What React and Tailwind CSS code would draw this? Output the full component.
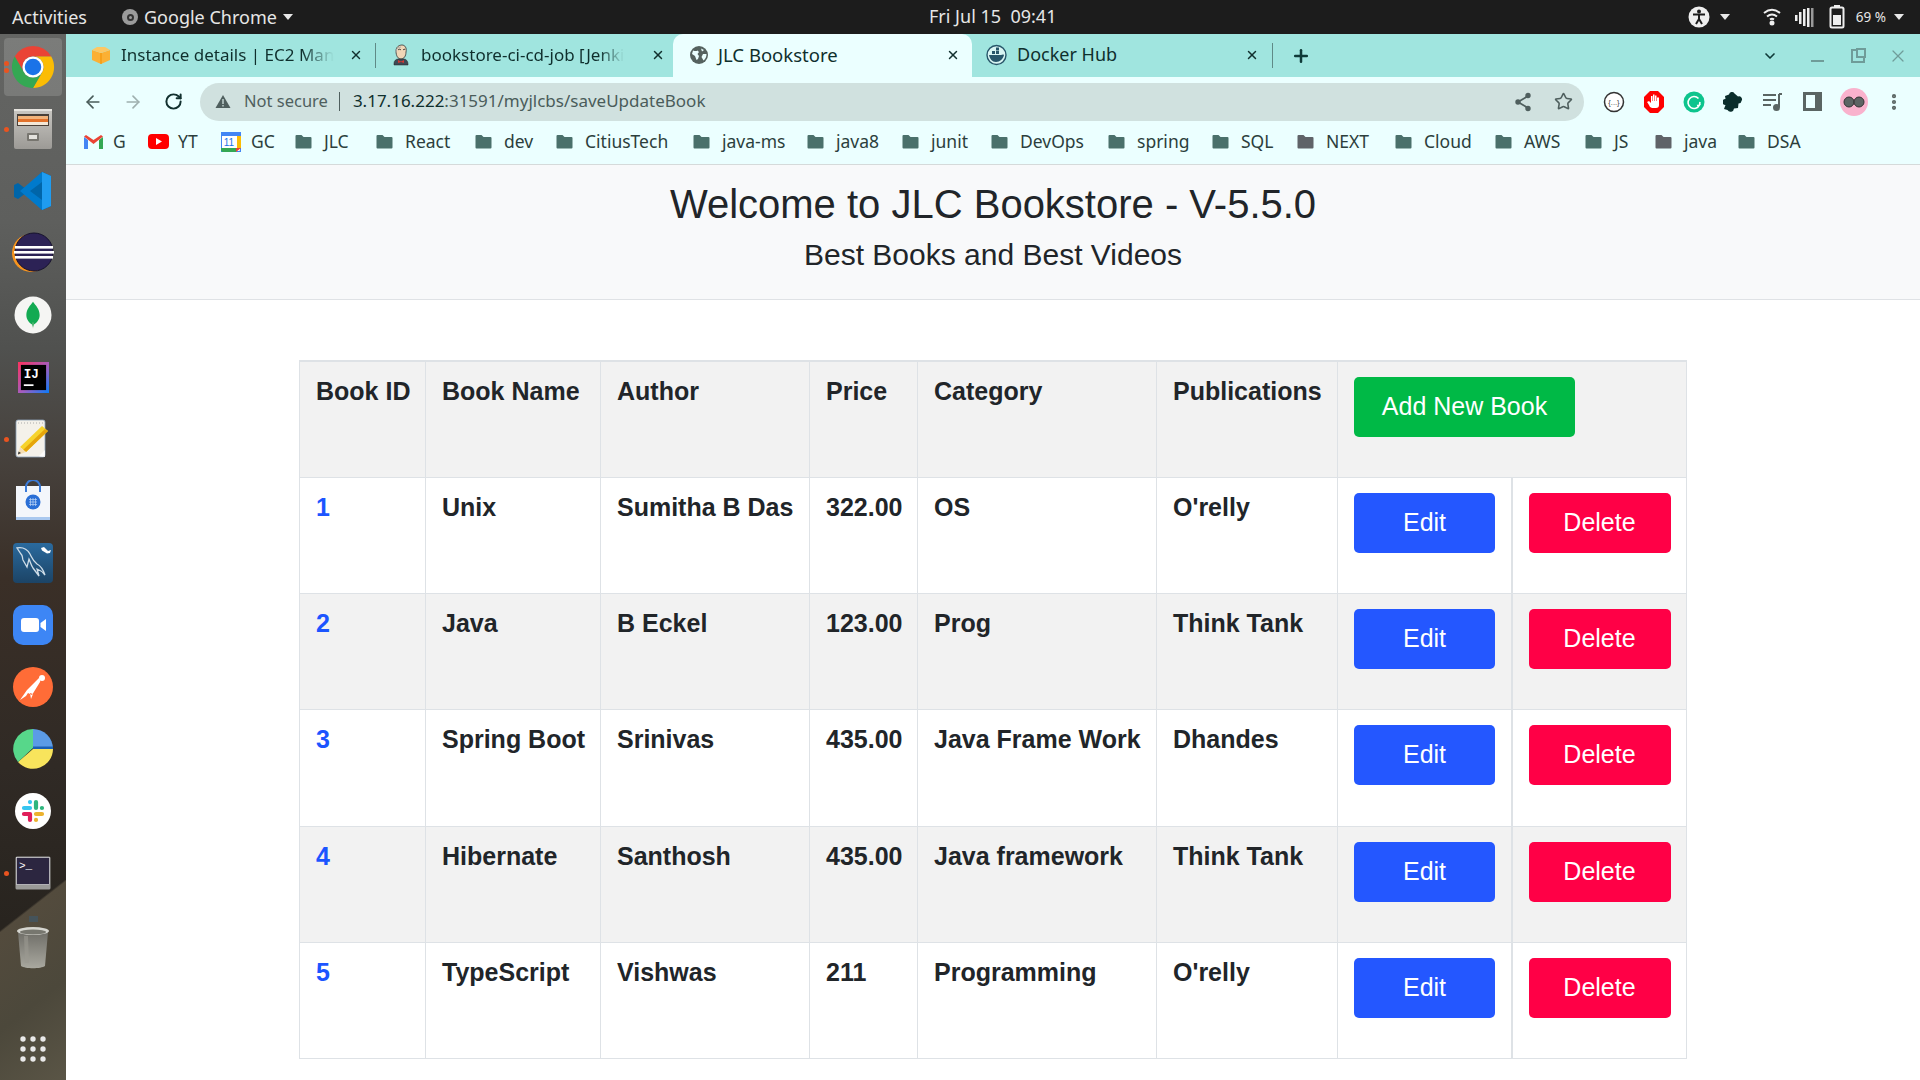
import React from 'react';
import { ArrowLeft, ArrowRight, RotateCw, Star, Plus, ChevronDown, X, EllipsisVertical } from 'lucide-react';

const ui = "font-['Noto_Sans','Lato',sans-serif]";

function ChromeLogo({ size = 46 }) {
  return (
    <svg width={size} height={size} viewBox="0 0 48 48">
      <path fill="#ea4335" d="M24 2a22 22 0 0 1 19.05 11H24a11 11 0 0 0-9.53 16.5L4.95 13A22 22 0 0 1 24 2z" />
      <path fill="#fbbc04" d="M43.05 13A22 22 0 0 1 24 46l9.53-16.5A11 11 0 0 0 24 13z" />
      <path fill="#34a853" d="M4.95 13 14.47 29.5A11 11 0 0 0 33.53 29.5L24 46A22 22 0 0 1 4.95 13z" />
      <circle cx="24" cy="24" r="11" fill="#fff" />
      <circle cx="24" cy="24" r="8.6" fill="#1a73e8" />
    </svg>
  );
}

function FilesIcon() {
  return (
    <svg width="40" height="40" viewBox="0 0 40 40">
      <defs>
        <linearGradient id="cab" x1="0" y1="0" x2="0" y2="1">
          <stop offset="0" stopColor="#c9c7c2" />
          <stop offset="1" stopColor="#9c9a96" />
        </linearGradient>
      </defs>
      <rect x="1" y="0" width="38" height="40" rx="2" fill="url(#cab)" />
      <rect x="1" y="0" width="38" height="2" fill="#e6e4df" />
      <rect x="4" y="5" width="32" height="12" fill="#4a4038" />
      <rect x="5" y="7" width="30" height="3" fill="#f2b37a" />
      <rect x="5" y="10" width="30" height="3" fill="#e2712a" />
      <rect x="5" y="13" width="30" height="3" fill="#f4e7d6" />
      <rect x="14" y="24" width="12" height="8" rx="1" fill="#77756f" />
      <rect x="16" y="26" width="8" height="4" fill="#e4e2dd" />
    </svg>
  );
}

function VscodeIcon() {
  return (
    <svg width="42" height="42" viewBox="0 0 42 42">
      <path fill="#0065a9" d="M30 2 14 19 6 13 2 15v12l4 2 8-6 16 17 9-4V6z" />
      <path fill="#007acc" d="M30 2 8 21l22 19 9-4V6zM30 12v18L18 21z" fillRule="evenodd" />
      <path fill="#1f9cf0" d="M30 2l9 4v30l-9 4z" />
    </svg>
  );
}

function EclipseIcon() {
  return (
    <svg width="44" height="44" viewBox="0 0 44 44">
      <circle cx="20" cy="22" r="19" fill="#f7941e" />
      <circle cx="23" cy="21" r="19" fill="#2c2255" stroke="#16122c" strokeWidth="1" />
      <rect x="4" y="15" width="38" height="2.6" fill="#fff" />
      <rect x="3" y="20" width="40" height="2.6" fill="#fff" />
      <rect x="4" y="25" width="38" height="2.6" fill="#fff" />
    </svg>
  );
}

function MongoIcon() {
  return (
    <svg width="38" height="38" viewBox="0 0 40 40">
      <circle cx="20" cy="20" r="19.500" fill="#f5f5f3" />
      <path fill="#13aa52" d="M20 6c3 4 7 8 7 14 0 5-3 8-6 10l-1 3-1-3c-3-2-6-5-6-10 0-6 4-10 7-14z" />
      <path fill="#b8c4a6" d="M19.600 28h.8l-.2 6h-.4z" />
    </svg>
  );
}

function IdeaIcon() {
  return (
    <svg width="31" height="31" viewBox="0 0 32 32">
      <defs>
        <linearGradient id="ij" x1="0" y1="0" x2="1" y2="1">
          <stop offset="0" stopColor="#fe315d" />
          <stop offset="0.55" stopColor="#a35ec0" />
          <stop offset="1" stopColor="#087cfa" />
        </linearGradient>
      </defs>
      <rect width="32" height="32" fill="url(#ij)" />
      <rect x="3" y="3" width="26" height="26" fill="#000" />
      <text x="6" y="17" fontFamily="Liberation Mono" fontWeight="700" fontSize="13" fill="#fff">IJ</text>
      <rect x="6" y="23" width="10" height="1.800" fill="#fff" />
    </svg>
  );
}

function NotesIcon() {
  return (
    <svg width="36" height="40" viewBox="0 0 36 40">
      <rect x="1" y="1" width="29" height="37" rx="2" fill="#f4f1ea" stroke="#8da2b8" strokeWidth="0.8" />
      <path d="M3 4h25" stroke="#aaa" strokeDasharray="1 2" strokeWidth="1" />
      <path fill="#f6d32d" d="M5 28 27 7l6 5-22 21z" />
      <path fill="#e5a50a" d="M8 31l22-21 3 2-22 21z" />
      <path fill="#f5deb3" d="M5 28l6 5-8 3z" />
      <path fill="#333" d="M3.500 32.500 6 34l-3 1.500z" />
      <path fill="#fff" d="M30 38c-4 0-6-1-6-1l6-6z" opacity="0.8" />
    </svg>
  );
}

function StoreIcon() {
  return (
    <svg width="36" height="42" viewBox="0 0 36 42">
      <path d="M11 12V7a7 7 0 0 1 14 0v5" fill="none" stroke="#3b7bd8" strokeWidth="2" />
      <rect x="1" y="6" width="34" height="34" fill="#f3f6fb" />
      <path d="M11 6v6M25 6v6" stroke="#3b7bd8" strokeWidth="2" />
      <rect x="1" y="37" width="34" height="3" fill="#a9c8ef" />
      <circle cx="18" cy="22" r="7.500" fill="#2a6fd6" />
      <path d="M14 19.500h8M14 22h8M14 24.500h8M15.500 18v8M18 18v8M20.500 18v8" stroke="#bcd4f5" strokeWidth="0.7" />
    </svg>
  );
}

function MysqlIcon() {
  return (
    <svg width="40" height="40" viewBox="0 0 40 40">
      <defs>
        <linearGradient id="sql" x1="0" y1="0" x2="0" y2="1">
          <stop offset="0" stopColor="#2a6a9e" />
          <stop offset="1" stopColor="#1c4466" />
        </linearGradient>
      </defs>
      <rect width="40" height="40" rx="4" fill="url(#sql)" />
      <path d="M4 5c5-1 10 1 13 6 2 4 3 7 7 10 4 2 6 5 8 11-3-4-5-5-8-6l2 7-6-8c-2-3-3-7-4-9l-2 8-4-7c-1-3 0-4-2-6z" fill="none" stroke="#cfdde8" strokeWidth="1.300" />
      <path d="M28 5l3-1 4 4 3-1-1 3-3 .5-5-3z" fill="#fff" />
    </svg>
  );
}

function ZoomIcon() {
  return (
    <svg width="40" height="40" viewBox="0 0 40 40">
      <rect width="40" height="40" rx="10" fill="#3d86f5" />
      <rect x="8" y="13" width="18" height="14" rx="3" fill="#fff" />
      <path fill="#fff" d="M27.500 18 33 14v12l-5.500-4z" />
    </svg>
  );
}

function PostmanIcon() {
  return (
    <svg width="40" height="40" viewBox="0 0 40 40">
      <circle cx="20" cy="20" r="20" fill="#ff6c37" />
      <circle cx="29" cy="11" r="3" fill="#fff" />
      <path fill="#fff" d="M26 11 14 23l-7 10 6-4 2-3 4 2 8-13c1-2-1-4-1-4zM17 26l3 1-2 5z" />
    </svg>
  );
}

function PieIcon() {
  return (
    <svg width="40" height="40" viewBox="0 0 40 40">
      <path fill="#5b9be6" d="M20 0a20 20 0 0 1 20 20H20z" />
      <path fill="#1a5fb4" d="M20 17.500h20V20H20z" />
      <path fill="#f8e45c" d="M40 20a20 20 0 0 1-35 13l15-13z" />
      <path fill="#57d78a" d="M20 0v19L5 33A20 20 0 0 1 20 0z" />
    </svg>
  );
}

function SlackIcon() {
  return (
    <svg width="36" height="36" viewBox="0 0 36 36">
      <circle cx="18" cy="18" r="18" fill="#fff" />
      <g strokeWidth="4.200" strokeLinecap="round" fill="none">
        <path stroke="#36c5f0" d="M9 15h6M15 9v.1" />
        <path stroke="#2eb67d" d="M21 9v6M27 15h-.1" />
        <path stroke="#ecb22e" d="M21 21h6M21 27v-.1" />
        <path stroke="#e01e5a" d="M15 21v6M9 21h6" />
      </g>
    </svg>
  );
}

function TerminalIcon() {
  return (
    <svg width="36" height="34" viewBox="0 0 36 34">
      <rect x="0.500" y="0.500" width="35" height="33" rx="1.500" fill="#9a9a98" />
      <rect x="1.500" y="1.500" width="33" height="27" fill="#2c2640" stroke="#e8e8e8" strokeWidth="0.600" />
      <text x="4" y="13" fontFamily="Liberation Mono" fontSize="11" fill="#fff">{'>_'}</text>
    </svg>
  );
}

function TrashIcon() {
  return (
    <svg width="34" height="54" viewBox="0 0 34 54">
      <rect x="13" y="0" width="9" height="6" fill="#45535a" />
      <defs>
        <linearGradient id="bin" x1="0" y1="0" x2="0" y2="1">
          <stop offset="0" stopColor="#6f6e68" />
          <stop offset="1" stopColor="#a9a89f" />
        </linearGradient>
      </defs>
      <path fill="url(#bin)" d="M2 16h30l-3 34c-4 3-20 3-24 0z" />
      <path fill="#9b9a91" opacity="0.6" d="M8 20h4l1 27h-4z" />
      <ellipse cx="17" cy="15" rx="16" ry="4" fill="#d5d5cf" />
      <ellipse cx="17" cy="16" rx="13" ry="2.500" fill="#77776f" />
    </svg>
  );
}

function GridIcon() {
  return (
    <svg width="26" height="26" viewBox="0 0 26 26" fill="#e9e9e9">
      {[3, 13, 23].map((y) =>
        [3, 13, 23].map((x) => <circle key={`${x}-${y}`} cx={x} cy={y} r="2.700" />)
      )}
    </svg>
  );
}

function Dock() {
  const slots = [
    { icon: <ChromeLogo />, active: true, dots: 2 },
    { icon: <FilesIcon />, dots: 1 },
    { icon: <VscodeIcon /> },
    { icon: <EclipseIcon /> },
    { icon: <MongoIcon /> },
    { icon: <IdeaIcon /> },
    { icon: <NotesIcon />, dots: 1 },
    { icon: <StoreIcon /> },
    { icon: <MysqlIcon /> },
    { icon: <ZoomIcon /> },
    { icon: <PostmanIcon /> },
    { icon: <PieIcon /> },
    { icon: <SlackIcon /> },
    { icon: <TerminalIcon />, dots: 1 },
  ];
  return (
    <div className="relative flex w-[66px] shrink-0 flex-col overflow-hidden bg-[linear-gradient(180deg,#646563_0%,#5e5f5d_18%,#50514f_30%,#453f3a_42%,#3a2f27_52%,#302a25_70%,#28241f_85%)] pt-[2px]">
      <div className="absolute inset-x-0 bottom-0 h-[200px] bg-[linear-gradient(142deg,transparent_20%,#534b3d_21%,#4c483b_60%,#5a5546_100%)]" />
      {slots.map((s, i) => (
        <div key={i} className="relative flex h-[62px] shrink-0 items-center justify-center">
          {s.active && <div className="absolute inset-x-[4px] inset-y-[2px] rounded-[4px] bg-white/15" />}
          {s.dots === 1 && <div className="absolute left-[4px] top-[29px] h-[5px] w-[5px] rounded-full bg-[#e95420]" />}
          {s.dots === 2 && (
            <>
              <div className="absolute left-[4px] top-[25px] h-[5px] w-[5px] rounded-full bg-[#e95420]" />
              <div className="absolute left-[4px] top-[32px] h-[5px] w-[5px] rounded-full bg-[#e95420]" />
            </>
          )}
          <div className="relative flex">{s.icon}</div>
        </div>
      ))}
      <div className="relative mt-[12px] flex justify-center">
        <TrashIcon />
      </div>
      <div className="relative mt-auto flex justify-center pb-[18px]">
        <GridIcon />
      </div>
    </div>
  );
}

function Caret({ className = '' }) {
  return <span className={`inline-block h-0 w-0 border-x-[5px] border-t-[6px] border-x-transparent border-t-[#e8e8e8] ${className}`} />;
}

function TopBar() {
  return (
    <div className={`relative flex h-[34px] shrink-0 items-center bg-[#1c1c1c] text-[18px] text-[#e6e6e6] ${ui}`}>
      <span className="ml-[12px]">Activities</span>
      <span className="ml-[35px] flex h-[16px] w-[16px] items-center justify-center rounded-full bg-[#9b9b9b]">
        <span className="h-[7px] w-[7px] rounded-full border-2 border-[#333]" />
      </span>
      <span className="ml-[6px]">Google Chrome</span>
      <Caret className="ml-[6px]" />
      <span className="absolute left-[929px] top-[3px] whitespace-pre">Fri Jul 15  09:41</span>
      <div className="ml-auto flex items-center pr-[16px]">
        <svg width="22" height="22" viewBox="0 0 22 22">
          <circle cx="11" cy="11" r="10.500" fill="#eee" />
          <circle cx="11" cy="5.500" r="2" fill="#1c1c1c" />
          <path d="M5 8.500h12M11 9v4M11 13l-3 5M11 13l3 5" stroke="#1c1c1c" strokeWidth="2" fill="none" />
        </svg>
        <Caret className="ml-[10px]" />
        <svg className="ml-[32px]" width="20" height="22" viewBox="0 0 20 22" fill="none" stroke="#eee" strokeWidth="2">
          <path d="M2 7c5-4 11-4 16 0M5 10.500c3-2.500 7-2.500 10 0M8 13.500c1.500-1 2.500-1 4 0" />
          <circle cx="10" cy="17" r="1.500" fill="#eee" />
        </svg>
        <svg className="ml-[12px]" width="20" height="22" viewBox="0 0 20 22" fill="#eee">
          <rect x="1" y="9" width="2.500" height="6" />
          <rect x="5" y="6" width="2.500" height="12" />
          <rect x="9" y="3" width="2.500" height="17" />
          <rect x="13" y="2" width="2.500" height="19" />
          <rect x="17" y="2" width="2.500" height="19" fill="#999" />
        </svg>
        <svg className="ml-[15px]" width="16" height="24" viewBox="0 0 16 24">
          <rect x="5" y="0" width="6" height="3" fill="#eee" />
          <rect x="1.500" y="2.500" width="13" height="20" rx="1.500" fill="none" stroke="#eee" strokeWidth="2" />
          <rect x="4" y="10" width="8" height="10" fill="#eee" />
        </svg>
        <span className="ml-[11px] text-[13.500px]">69 %</span>
        <Caret className="ml-[8px]" />
      </div>
    </div>
  );
}

function AwsIcon() {
  return (
    <svg width="18" height="18" viewBox="0 0 18 18">
      <path fill="#fbb034" d="M0 4l9 3 9-3v10l-9 4-9-4z" />
      <path fill="#fdc763" d="M0 4l5-3h8l5 3-9 3z" />
      <path d="M9 7v11" stroke="#f29100" strokeWidth="1" />
    </svg>
  );
}

function JenkinsIcon() {
  return (
    <svg width="18" height="22" viewBox="0 0 18 22">
      <path fill="#f0d6b7" stroke="#333" strokeWidth="0.800" d="M4 7c0-4 3-6 6-6s5 3 4 7c0 4-2 7-5 7-3 0-5-3-5-8z" />
      <path d="M2 19c0-2 2-4 4-4h6c2 0 4 2 4 5v1H2z" fill="#3f4a55" stroke="#222" strokeWidth="0.500" />
      <path d="M6 16l3 1.500 3-1.500v3l-3-1-3 1z" fill="#d33833" />
      <path d="M6 6c1-1 2-1 3 0M11 6c1-1 2-1 2 0" stroke="#333" fill="none" />
      <path d="M9 3C6 3 4 5 4 8" stroke="#aaa" fill="none" />
    </svg>
  );
}

function DockerIcon() {
  return (
    <svg width="21" height="22" viewBox="0 0 21 22">
      <circle cx="10.500" cy="11" r="9.500" fill="#d8f4f2" stroke="#27566a" strokeWidth="1.400" />
      <path fill="#27566a" d="M3 11h12c1 0 2-1 3 0-1 4-4 7-8 7-4 0-6-3-7-7z" />
      <rect x="6" y="7" width="3" height="3" fill="#27566a" />
      <rect x="10" y="7" width="3" height="3" fill="#27566a" />
      <rect x="10" y="3.500" width="3" height="3" fill="#27566a" />
    </svg>
  );
}

function GlobeIcon() {
  return (
    <svg width="18" height="18" viewBox="0 0 18 18">
      <circle cx="9" cy="9" r="9" fill="#55625f" />
      <path fill="#ebffff" d="M3 4.500c2 .5 3 1 4.500 0L9 6 7.500 8 9 10l-1 3-1.500 1L5 10 2 8zM11 2.500l3 1.500-2 1.500zM13 8h3.500c0 3-1 5-3 6.500L11.500 11z" />
    </svg>
  );
}

function TabSep() {
  return <div className="h-[25px] w-px shrink-0 bg-[#5f8a87]" />;
}

function TabClose() {
  return <X size={14} strokeWidth={2.500} className="shrink-0 text-[#12312f]" />;
}

function TabStrip() {
  return (
    <div className={`flex h-[43px] shrink-0 items-center bg-[#a0e5df] text-[17px] text-[#0f2f2d] ${ui}`}>
      <div className="ml-[26px] flex w-[283px] items-center pb-[2px]">
        <AwsIcon />
        <span className="ml-[11px] whitespace-nowrap bg-[linear-gradient(90deg,#0f2f2d_85%,transparent)] bg-clip-text text-transparent">Instance details | EC2 Man</span>
        <span className="ml-auto mr-[12px]"><TabClose /></span>
      </div>
      <TabSep />
      <div className="ml-[16px] flex w-[281px] items-center pb-[2px]">
        <JenkinsIcon />
        <span className="ml-[11px] whitespace-nowrap bg-[linear-gradient(90deg,#0f2f2d_88%,transparent)] bg-clip-text text-transparent">bookstore-ci-cd-job [Jenki</span>
        <span className="ml-auto mr-[8px]"><TabClose /></span>
      </div>
      <div className="flex h-[43px] w-[299px] items-center rounded-t-[10px] bg-[#ebffff] pb-[2px] pl-[17px]">
        <GlobeIcon />
        <span className="ml-[10px] w-[228px] text-[18.500px]">JLC Bookstore</span>
        <TabClose />
      </div>
      <div className="flex w-[300px] items-center pb-[2px] pl-[14px]">
        <DockerIcon />
        <span className="ml-[10px] w-[228px] text-[18px]">Docker Hub</span>
        <TabClose />
      </div>
      <TabSep />
      <Plus size={20} strokeWidth={3} className="ml-[18px] text-[#0f3a38]" />
      <div className="ml-auto flex items-center pr-[12px] text-[#3c6563]">
        <ChevronDown size={16} strokeWidth={2.500} className="text-[#0f3a38]" />
        <span className="ml-[33px] mt-[10px] h-[2px] w-[13px] bg-[#6f9c99]" />
        <span className="relative ml-[27px] h-[14px] w-[14px] border-[2px] border-[#6f9c99]">
          <span className="absolute -right-[3px] -top-[3px] h-[10px] w-[10px] border-[2px] border-[#6f9c99] bg-[#a0e5df]" />
        </span>
        <X size={20} strokeWidth={1.500} className="ml-[23px] text-[#6f9c99]" />
      </div>
    </div>
  );
}

function ExtIcons() {
  return (
    <div className="flex items-center">
      <svg className="ml-[19px]" width="22" height="22" viewBox="0 0 22 22">
        <circle cx="11" cy="11" r="9.500" fill="#fff" stroke="#333" strokeWidth="1.500" />
        <text x="11" y="14" textAnchor="middle" fontSize="7.500" fontFamily="Liberation Sans" fill="#444">{'{...}'}</text>
      </svg>
      <svg className="ml-[18px]" width="22" height="24" viewBox="0 0 22 24">
        <path fill="#f00" d="M7 1h8l6 6v10l-6 6H7l-6-6V7z" />
        <path fill="#fff" d="M7 17c-1-2-2-4-3-5l2-1 2 2V6h1.500v5H10V4.500h1.500V11h.5V5.500h1.500V11h.5V7.500H16V15c0 2-1 3-3 3H9z" />
      </svg>
      <svg className="ml-[18px]" width="22" height="22" viewBox="0 0 22 22">
        <circle cx="11" cy="11" r="10.500" fill="#0dc48d" />
        <path d="M15.500 7.500a6 6 0 1 0 1 6.500l-2.500.5M16.500 14l.5-3" fill="none" stroke="#fff" strokeWidth="1.600" />
      </svg>
      <svg className="ml-[18px]" width="20" height="22" viewBox="0 0 20 22">
        <path fill="#0b2e2c" d="M6 3.500a3 3 0 0 1 5.500-1L15 5.500a3 3 0 0 1 3.500 4.500 3 3 0 0 1-3 2.500L15 17l-4 .5a3.500 3.500 0 0 1-6.500 1.500L1 18l1.500-4a3 3 0 0 1 0-6L2 5z" />
      </svg>
      <svg className="ml-[20px]" width="20" height="20" viewBox="0 0 20 20" fill="none" stroke="#5a6563" strokeWidth="2">
        <path d="M0 3h13M0 8h13M0 13h8" />
        <path d="M16 2h3M16 2v13" />
        <circle cx="13.500" cy="15.500" r="2.500" fill="#5a6563" />
      </svg>
      <div className="ml-[20px] h-[19px] w-[19px] border-[3px] border-r-[7px] border-[#5a6563]" />
      <div className="ml-[18px] flex h-[28px] w-[28px] items-center justify-center rounded-full bg-[#f9b2cd]">
        <svg width="24" height="12" viewBox="0 0 24 12">
          <circle cx="7" cy="6" r="5" fill="#5d6463" stroke="#333" />
          <circle cx="17" cy="6" r="5" fill="#5d6463" stroke="#333" />
        </svg>
      </div>
      <EllipsisVertical size={20} strokeWidth={3} className="ml-[16px] text-[#5a6563]" />
    </div>
  );
}

function Toolbar() {
  return (
    <div className={`flex h-[47px] shrink-0 items-center bg-[#ebffff] pt-[2px] ${ui}`}>
      <ArrowLeft size={20} strokeWidth={2} className="ml-[17px] text-[#4a5c5a]" />
      <ArrowRight size={20} strokeWidth={2} className="ml-[20px] text-[#9fb0af]" />
      <RotateCw size={19} strokeWidth={2.500} className="ml-[21px] text-[#12312f]" />
      <div className="ml-[17px] flex h-[38px] w-[1384px] shrink-0 items-center rounded-full bg-[#d0e1df]">
        <svg className="ml-[15px]" width="16" height="15" viewBox="0 0 16 15">
          <path fill="#4f5f5e" d="M8 1l7.500 13H.500z" />
          <path d="M8 5v5M8 11v1.500" stroke="#d0e1df" strokeWidth="1.300" />
        </svg>
        <span className="ml-[13px] pb-[1px] text-[16.500px] text-[#4f5f5e]">Not secure</span>
        <span className="ml-[11px] h-[19px] w-px bg-[#4f5f5e]" />
        <span className="ml-[13px] pb-[2px] text-[17px] text-[#0f2f2d]">3.17.16.222<span className="text-[#4a5c5a]">:31591/myjlcbs/saveUpdateBook</span></span>
        <svg className="ml-auto" width="18" height="20" viewBox="0 0 18 20" fill="#4f5f5e" stroke="#4f5f5e" strokeWidth="1.800">
          <path d="M14 4 4 10l10 6" fill="none" />
          <circle cx="14" cy="3.500" r="1.800" />
          <circle cx="4" cy="10" r="1.800" />
          <circle cx="14" cy="16.500" r="1.800" />
        </svg>
        <Star size={19} strokeWidth={2} className="ml-[22px] mr-[11px] text-[#4f5f5e]" />
      </div>
      <ExtIcons />
    </div>
  );
}

const bookmarks = [
  { name: 'JLC', w: 'w-[81px]' },
  { name: 'React', w: 'w-[99px]' },
  { name: 'dev', w: 'w-[81px]' },
  { name: 'CitiusTech', w: 'w-[137px]' },
  { name: 'java-ms', w: 'w-[114px]' },
  { name: 'java8', w: 'w-[95px]' },
  { name: 'junit', w: 'w-[89px]' },
  { name: 'DevOps', w: 'w-[117px]' },
  { name: 'spring', w: 'w-[104px]' },
  { name: 'SQL', w: 'w-[85px]' },
  { name: 'NEXT', w: 'w-[98px]', gray: true },
  { name: 'Cloud', w: 'w-[100px]' },
  { name: 'AWS', w: 'w-[90px]' },
  { name: 'JS', w: 'w-[70px]' },
  { name: 'java', w: 'w-[83px]', gray: true },
  { name: 'DSA', w: 'w-[90px]' },
];

function FolderIcon({ gray }) {
  return (
    <svg className="shrink-0" width="17" height="15" viewBox="0 0 17 15" fill={gray ? '#5f6368' : '#4a706b'}>
      <path d="M1.500 1h5l2 2h7a1 1 0 0 1 1 1v9.500a1 1 0 0 1-1 1h-14a1 1 0 0 1-1-1V2a1 1 0 0 1 1-1z" />
    </svg>
  );
}

function BookmarksBar() {
  return (
    <div className={`flex h-[41px] shrink-0 items-center border-b border-[#d5dada] bg-[#ebffff] pb-[5px] text-[17.500px] text-[#2c3e3c] ${ui}`}>
      <div className="ml-[18px] flex w-[64px] items-center">
        <svg width="19" height="14" viewBox="0 0 19 14">
          <path fill="#4285f4" d="M0 2v12h4V5z" />
          <path fill="#34a853" d="M15 5v9h4V2z" />
          <path fill="#ea4335" d="M0 1.500 9.500 9 19 1.500 17 0 9.500 5 2 0z" />
        </svg>
        <span className="ml-[10px]">G</span>
      </div>
      <div className="flex w-[73px] items-center">
        <svg width="21" height="15" viewBox="0 0 21 15">
          <rect width="21" height="15" rx="4" fill="#f00" />
          <path fill="#fff" d="M8 4l6 3.500L8 11z" />
        </svg>
        <span className="ml-[9px]">YT</span>
      </div>
      <div className="flex w-[74px] items-center">
        <svg width="20" height="20" viewBox="0 0 20 20">
          <rect width="20" height="20" rx="2" fill="#fff" stroke="#4285f4" strokeWidth="2" />
          <path d="M1 1h18v3H1z" fill="#4285f4" />
          <path d="M0 16h15v4H2a2 2 0 0 1-2-2z" fill="#34a853" />
          <path d="M15 16h5l-5 4z" fill="#ea4335" />
          <path d="M16 4h4v12h-4z" fill="#fbbc04" />
          <text x="8" y="14" textAnchor="middle" fontSize="10" fontFamily="Liberation Sans" fill="#1a73e8">11</text>
        </svg>
        <span className="ml-[10px]">GC</span>
      </div>
      {bookmarks.map((b) => (
        <div key={b.name} className={`flex shrink-0 items-center ${b.w}`}>
          <FolderIcon gray={b.gray} />
          <span className="ml-[12px]">{b.name}</span>
        </div>
      ))}
    </div>
  );
}

const books = [
  { id: 1, name: 'Unix', author: 'Sumitha B Das', price: '322.00', category: 'OS', pub: "O'relly", h: 'h-[116px] bg-white' },
  { id: 2, name: 'Java', author: 'B Eckel', price: '123.00', category: 'Prog', pub: 'Think Tank', h: 'h-[116px] bg-[#f2f2f2]' },
  { id: 3, name: 'Spring Boot', author: 'Srinivas', price: '435.00', category: 'Java Frame Work', pub: 'Dhandes', h: 'h-[117px] bg-white' },
  { id: 4, name: 'Hibernate', author: 'Santhosh', price: '435.00', category: 'Java framework', pub: 'Think Tank', h: 'h-[116px] bg-[#f2f2f2]' },
  { id: 5, name: 'TypeScript', author: 'Vishwas', price: '211', category: 'Programming', pub: "O'relly", h: 'h-[116px] bg-white' },
];

const textCell = 'whitespace-nowrap border border-[#dee2e6] px-[16px] pt-[11px] align-top';
const btnCell = 'border border-[#dee2e6] px-[16px] pt-[15px] align-top';

function BookTable() {
  return (
    <table className="mx-auto mt-[60px] w-[1387px] table-fixed border-collapse border-t-2 border-[#dee2e6] text-[25px] font-bold leading-[36px] text-[#212529]">
      <colgroup>
        <col className="w-[126px]" />
        <col className="w-[175px]" />
        <col className="w-[209px]" />
        <col className="w-[108px]" />
        <col className="w-[239px]" />
        <col className="w-[181px]" />
        <col className="w-[174px]" />
        <col className="w-[175px]" />
      </colgroup>
      <thead>
        <tr className="h-[116px] bg-[#f2f2f2]">
          <th className={`${textCell} text-left font-bold`}>Book ID</th>
          <th className={`${textCell} text-left font-bold`}>Book Name</th>
          <th className={`${textCell} text-left font-bold`}>Author</th>
          <th className={`${textCell} text-left font-bold`}>Price</th>
          <th className={`${textCell} text-left font-bold`}>Category</th>
          <th className={`${textCell} text-left font-bold`}>Publications</th>
          <th className={`${btnCell} text-left font-bold`} colSpan={2}>
            <button className="h-[60px] w-[221px] rounded-[5px] bg-[#00b946] pb-[2px] text-[25px] font-normal text-white">Add New Book</button>
          </th>
        </tr>
      </thead>
      <tbody>
        {books.map((b) => (
          <tr key={b.id} className={b.h}>
            <td className={textCell}><a className="text-[#1c55ff]" href="#">{b.id}</a></td>
            <td className={textCell}>{b.name}</td>
            <td className={textCell}>{b.author}</td>
            <td className={textCell}>{b.price}</td>
            <td className={textCell}>{b.category}</td>
            <td className={textCell}>{b.pub}</td>
            <td className={btnCell}>
              <button className="h-[60px] w-[141px] rounded-[5px] bg-[#2457ff] pb-[2px] text-[25px] font-normal text-white">Edit</button>
            </td>
            <td className={`${btnCell} border-l-2`}>
              <button className="h-[60px] w-[142px] rounded-[5px] bg-[#ff0046] pb-[2px] text-[25px] font-normal text-white">Delete</button>
            </td>
          </tr>
        ))}
      </tbody>
    </table>
  );
}

function App() {
  return (
    <div className="flex h-screen flex-col overflow-hidden bg-white font-['Liberation_Sans',Arial,sans-serif]">
      <TopBar />
      <div className="flex min-h-0 flex-1">
        <Dock />
        <div className="flex min-w-0 flex-1 flex-col">
          <TabStrip />
          <Toolbar />
          <BookmarksBar />
          {/* Page */}
          <div className="flex h-[135px] shrink-0 flex-col items-center border-b border-[#dfe2e5] bg-[#f8f9fa] text-[#212529]">
            <h1 className="mt-[15px] text-[40px] leading-[48px]">Welcome to JLC Bookstore - V-5.5.0</h1>
            <h2 className="mt-[9px] text-[30px] leading-[36px]">Best Books and Best Videos</h2>
          </div>
          <BookTable />
        </div>
      </div>
    </div>
  );
}

export default App;
